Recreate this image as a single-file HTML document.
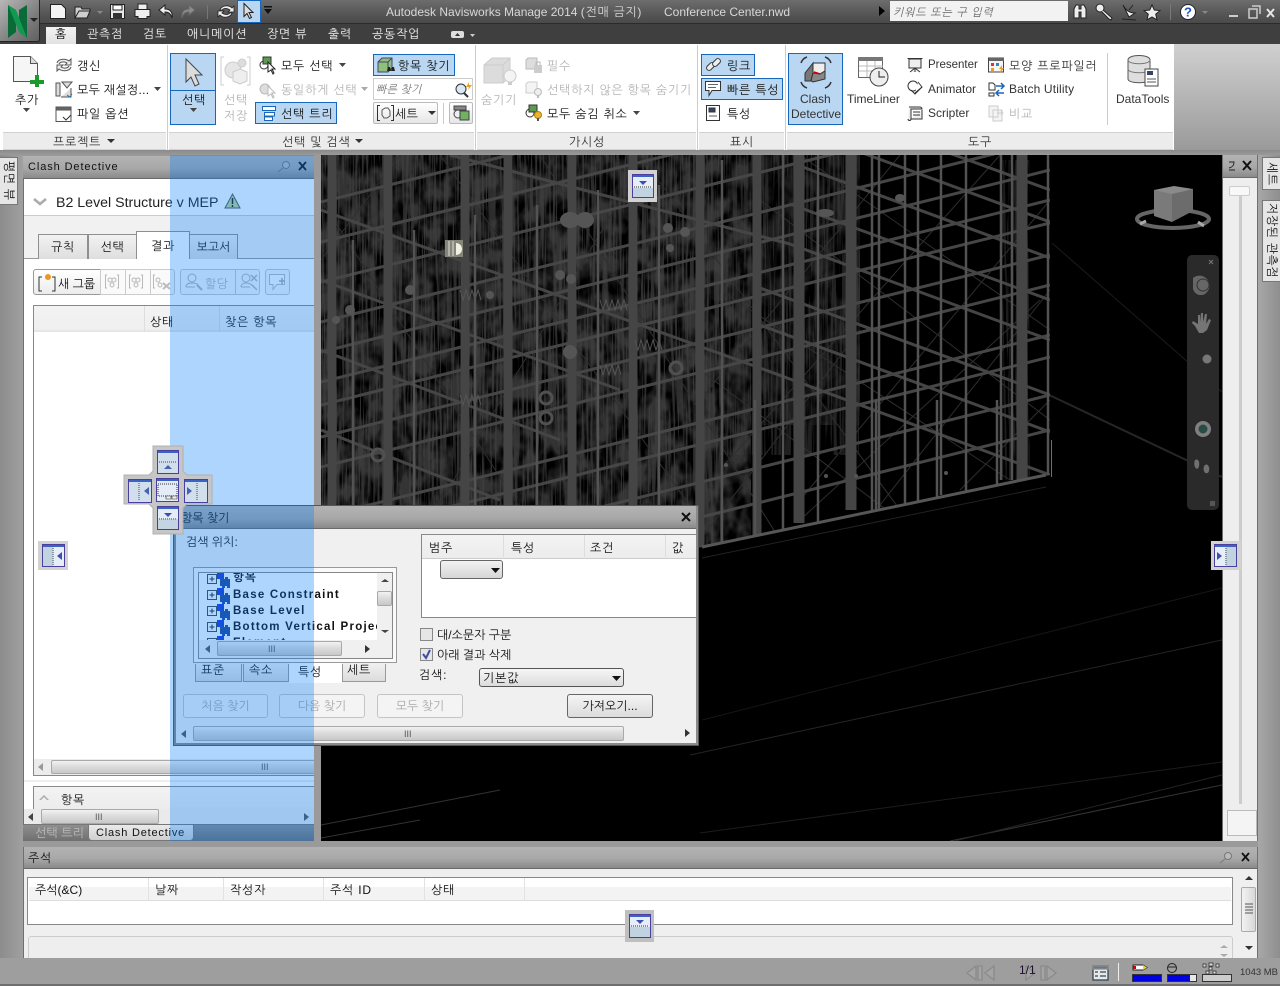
<!DOCTYPE html>
<html lang="ko"><head><meta charset="utf-8"><title>Autodesk Navisworks Manage 2014</title>
<style>
*{box-sizing:border-box}
html,body{margin:0;padding:0;width:1280px;height:986px;overflow:hidden;background:#9a9a9a}
body{position:relative;font:12px/14px "Liberation Sans","NanumGothic","Noto Sans CJK KR",sans-serif;color:#111}
.a{position:absolute}
.t{position:absolute;white-space:nowrap;line-height:14px;letter-spacing:.78px;margin-top:1px}
.l{letter-spacing:0;margin-top:0}
.d{letter-spacing:0}
.g{color:#b4b4b4}
.w{color:#eee}
.bb{position:absolute;background:#b9d7f2;border:1px solid #1768bd}
.band{position:absolute;top:132px;height:18px;background:#ececec;border-top:1px solid #d2d2d2;border-bottom:1px solid #d2d2d2}
.tb{position:absolute;background:linear-gradient(#b3b3b3,#a8a8a8 55%,#8a8a8a);border-bottom:1px solid #6a6a6a}
.sb{position:absolute;background:linear-gradient(#f2f2f2,#dcdcdc 45%,#c8c8c8);border:1px solid #a9a9a9;border-radius:2px}
.btn{position:absolute;border:1px solid #c4c4c4;border-radius:3px;background:#f4f4f4;text-align:center;color:#aaa;line-height:22px}
.tab{position:absolute;background:linear-gradient(#f2f2f2,#dedede);border:1px solid #8f8f8f;border-bottom:0;text-align:center;line-height:25px;letter-spacing:.6px}
svg{position:absolute;overflow:visible}
.vt{position:absolute;writing-mode:vertical-rl;text-orientation:sideways;white-space:nowrap;background:#e6e6e6;border:1px solid #777;text-align:center;letter-spacing:.6px}
</style></head><body>

<!-- background side gradients -->
<div class="a" style="left:0;top:150px;width:23px;height:836px;background:linear-gradient(90deg,#8c8c8c,#a0a0a0)"></div>
<div class="a" style="left:1258px;top:150px;width:22px;height:836px;background:linear-gradient(90deg,#a8a8a8,#8e8e8e)"></div>

<!-- title bar -->
<div class="a" style="left:0;top:0;width:1280px;height:24px;background:linear-gradient(#6d6d6d,#565656 60%,#4a4a4a);border-bottom:1px solid #2b2b2b"></div>
<div class="a" style="left:0;top:24px;width:1280px;height:20px;background:#3f3f3f"></div>
<div class="t l" style="left:386px;top:5px;color:#d8d8d8">Autodesk Navisworks Manage 2014 <span style="letter-spacing:.7px">(전매 금지)</span></div>
<div class="t l" style="left:664px;top:5px;color:#d8d8d8">Conference Center.nwd</div>
<svg style="left:878px;top:6px" width="8" height="10"><path d="M1 0l6 5-6 5z" fill="#000"/></svg>
<div class="a" style="left:890px;top:1px;width:178px;height:20px;background:#f2f2f2"></div>
<div class="t" style="left:893px;top:5px;color:#666;font-style:italic;font-size:11px">키워드 또는 구 입력</div>

<!-- app button -->
<div class="a" style="left:0;top:0;width:40px;height:42px;background:linear-gradient(135deg,#b8b8b8,#7e7e7e 60%,#606060);border:1px solid #222;border-top:0;border-left:0;border-radius:0 0 3px 0"></div>
<svg style="left:8px;top:5px" width="20" height="33"><path d="M0 0l8 5v22L0 33z" fill="#0a6a38"/><path d="M19 0l-8 5v22l8 6z" fill="#0a6a38"/><path d="M0 0l8 5 11 28-8-6z" fill="#0f9a50"/></svg>
<svg style="left:30px;top:18px" width="8" height="5"><path d="M0 0h8l-4 4z" fill="#222"/></svg>

<!-- QAT -->
<svg style="left:50px;top:3px" width="220" height="18" fill="none">
<path d="M.5 1.500h11l4 4v10H.5z" fill="#f4f4f4" stroke="#222"/>
<path d="M25 4h6l1 2h8v2H29l-4 7zM25 15h12l3-7H29" fill="#cfcfcf" stroke="#222"/>
<path d="M47 8l3 3 3-3" fill="#888"/>
<path d="M60.500 1.500h14v14h-14z" fill="#e8e8e8" stroke="#222"/><path d="M63 2h9v5h-9z" fill="#fff" stroke="#222"/><path d="M63 10h9v6h-9z" fill="#333"/>
<path d="M88 6V1h9v5M85 6.500h15v7h-3v2h-9v-2h-3z" fill="#eee" stroke="#222"/>
<path d="M115 2l-6 5 6 5V9c4 0 6 2 7 6 1-6-2-9-7-9z" fill="#eee" stroke="#222"/>
<path d="M139 2l6 5-6 5V9c-4 0-6 2-7 6-1-6 2-9 7-9z" fill="#8c8c8c" stroke="#666"/>
<path d="M157.500 2v14" stroke="#777"/>
<path d="M170 7c1-4 8-6 12-2l2-2v6h-6l2-2c-3-2-6-2-8 0zM182 10c-1 4-8 6-12 2l-2 2V8h6l-2 2c3 2 6 2 8 0z" fill="#eee" stroke="#222" stroke-width=".8"/>
</svg>
<div class="a" style="left:237px;top:0;width:24px;height:23px;background:#b9d7f2;border:1px solid #1768bd"></div>
<svg style="left:243px;top:3px" width="12" height="17"><path d="M1 .5v13l3-3 2.500 5 2-1-2.500-5h4z" fill="#ddd" stroke="#222"/></svg>
<svg style="left:264px;top:6px" width="9" height="8"><path d="M0 0h8v1.500H0zM0 3h8L4 8z" fill="#111"/></svg>

<!-- top-right icons -->
<svg style="left:1072px;top:2px" width="205" height="20" fill="none">
<path d="M2 7l2-4h3v4h2V3h3l2 4v9H9V10H7v6H2z" fill="#eee" stroke="#222"/>
<circle cx="28" cy="6" r="4" fill="#eee" stroke="#222"/><path d="M31 8l9 8-1 2-2-1-7-7" fill="#eee" stroke="#222"/>
<path d="M51 3c3 6 7 8 12 8l-6 4zM57 8l4-5M50 17l14 1" fill="#eee" stroke="#222"/>
<path d="M80 3l2.300 5 5.700.6-4.300 3.600 1.300 5.600L80 15l-5 2.800 1.300-5.600L72 8.600 77.700 8z" fill="#eee" stroke="#222"/>
<path d="M98.500 2v16" stroke="#7a7a7a"/>
<circle cx="116" cy="10" r="7.500" fill="#fff" stroke="#222"/><text x="116" y="14.500" font-size="13" font-weight="bold" fill="#1d55c0" text-anchor="middle" font-family="Liberation Sans">?</text>
<path d="M130 9h6l-3 3z" fill="#888"/>
<path d="M157 13h9v2h-9z" fill="#ccc"/>
<path d="M177 7h8v9h-8zM180 4h8v8" stroke="#ccc" stroke-width="1.500"/>
<path d="M195 7l7 8M202 7l-7 8" stroke="#e4e4e4" stroke-width="2"/>
</svg>

<!-- tabs -->
<div class="a" style="left:46px;top:27px;width:30px;height:17px;background:linear-gradient(#f2f2f2,#e2e2e2)"></div>
<div class="t" style="left:55px;top:26px">홈</div>
<div class="t w" style="left:87px;top:26px">관측점</div>
<div class="t w" style="left:143px;top:26px">검토</div>
<div class="t w" style="left:187px;top:26px">애니메이션</div>
<div class="t w" style="left:267px;top:26px">장면 뷰</div>
<div class="t w" style="left:328px;top:26px">출력</div>
<div class="t w" style="left:372px;top:26px">공동작업</div>
<svg style="left:451px;top:31px" width="24" height="8"><rect width="13" height="7" rx="2" fill="#ddd"/><path d="M4 5l2.500-3L9 5z" fill="#333"/><path d="M19 3h5l-2.500 3z" fill="#ccc"/></svg>

<!-- ribbon -->
<div class="a" style="left:0;top:44px;width:1174px;height:106px;background:#fff"></div>
<div class="a" style="left:1174px;top:44px;width:106px;height:106px;background:linear-gradient(#d0d0d0,#9a9a9a)"></div>
<div class="a" style="left:0;top:150px;width:1280px;height:5px;background:linear-gradient(#8a8a8a,#9a9a9a)"></div>
<div class="band" style="left:3px;width:163px"></div>
<div class="band" style="left:169px;width:305px"></div>
<div class="band" style="left:477px;width:219px"></div>
<div class="band" style="left:699px;width:85px"></div>
<div class="band" style="left:787px;width:386px"></div>
<div class="a" style="left:167px;top:45px;width:1px;height:105px;background:#ccc"></div>
<div class="a" style="left:475px;top:45px;width:1px;height:105px;background:#ccc"></div>
<div class="a" style="left:697px;top:45px;width:1px;height:105px;background:#ccc"></div>
<div class="a" style="left:785px;top:45px;width:1px;height:105px;background:#ccc"></div>
<div class="t" style="left:53px;top:134px;color:#333">프로젝트</div><svg style="left:107px;top:139px" width="8" height="5"><path d="M0 0h8L4 4z" fill="#333"/></svg>
<div class="t" style="left:282px;top:134px;color:#333">선택 및 검색</div><svg style="left:355px;top:139px" width="8" height="5"><path d="M0 0h8L4 4z" fill="#333"/></svg>
<div class="t" style="left:569px;top:134px;color:#333">가시성</div>
<div class="t" style="left:730px;top:134px;color:#333">표시</div>
<div class="t" style="left:968px;top:134px;color:#333">도구</div>

<!-- panel 1 -->
<svg style="left:12px;top:55px" width="32" height="32"><path d="M1.500 1.500h17l7 7v18h-24z" fill="#f6f6f6" stroke="#555"/><path d="M18.500 1.500v7h7" fill="#ddd" stroke="#555"/><path d="M23 20h4v5h5v4h-5v3h-4v-3h-5v-4h5z" fill="#1a9a2a"/></svg>
<div class="t" style="left:15px;top:92px">추가</div><svg style="left:23px;top:108px" width="8" height="5"><path d="M0 0h7L3.500 4z" fill="#444"/></svg>
<svg style="left:55px;top:57px" width="18" height="66" fill="none" stroke="#555">
<path d="M2 6c1-4 8-5 12-2l2-2v6h-6l2-2c-3-2-7-1-8 1M16 10c-1 4-8 5-12 2l-2 2V8h6l-2 2c3 2 7 1 8-1" fill="#eee"/>
<path d="M1 26h4v13H1zM7 25h10l-5 6z M6 40h10v-9" fill="#ddd"/><path d="M12 38l3 2 2-3" stroke="#27a"/>
<path d="M1 50.500h15v14H1z" fill="#fff"/><path d="M1 50h15v3H1z" fill="#666"/><path d="M8 60l3 3 5-5" stroke="#333"/>
</svg>
<div class="t" style="left:77px;top:58px">갱신</div>
<div class="t" style="left:77px;top:82px;letter-spacing:.3px">모두 재설정...</div><svg style="left:154px;top:87px" width="8" height="5"><path d="M0 0h7L3.500 4z" fill="#444"/></svg>
<div class="t" style="left:77px;top:106px">파일 옵션</div>

<!-- panel 2 -->
<div class="bb" style="left:170px;top:53px;width:46px;height:72px"></div>
<div class="a" style="left:171px;top:90px;width:44px;height:1px;background:#1768bd"></div>
<svg style="left:185px;top:58px" width="18" height="30"><path d="M1 1v23l5-5 4 9 4-2-4-9h7z" fill="#dcdcdc" stroke="#444"/></svg>
<div class="t" style="left:182px;top:92px">선택</div><svg style="left:190px;top:108px" width="8" height="5"><path d="M0 0h7L3.500 4z" fill="#444"/></svg>
<svg style="left:220px;top:56px" width="31" height="30" fill="none"><path d="M4 1H1v28h3M27 1h3v28h-3" stroke="#ccc"/><circle cx="13" cy="14" r="8" fill="#e6e6e6" stroke="#ccc"/><path d="M13 16l7-3 7 3v9l-7 3-7-3z" fill="#eee" stroke="#ccc"/><circle cx="22" cy="7" r="4" fill="#ddd" stroke="#ccc"/></svg>
<div class="t g" style="left:224px;top:92px">선택</div><div class="t g" style="left:224px;top:108px">저장</div>
<svg style="left:259px;top:57px" width="18" height="17"><circle cx="5" cy="8" r="4" fill="none" stroke="#333"/><rect x="4" y="0" width="8" height="7" fill="#5c9a50" stroke="#333"/><path d="M9 5v10l3-2 2 4 1-1-2-4h3z" fill="#fff" stroke="#222"/></svg>
<div class="t" style="left:281px;top:58px">모두 선택</div><svg style="left:339px;top:63px" width="8" height="5"><path d="M0 0h7L3.500 4z" fill="#444"/></svg>
<svg style="left:259px;top:81px" width="18" height="17"><circle cx="6" cy="8" r="5" fill="#ddd" stroke="#bbb"/><path d="M9 5v10l3-2 2 4 1-1-2-4h3z" fill="#fff" stroke="#bbb"/></svg>
<div class="t g" style="left:281px;top:82px">동일하게 선택</div><svg style="left:361px;top:87px" width="8" height="5"><path d="M0 0h7L3.500 4z" fill="#aaa"/></svg>
<div class="bb" style="left:255px;top:102px;width:82px;height:22px"></div>
<svg style="left:262px;top:106px" width="14" height="15" fill="none" stroke="#1768bd"><rect x=".5" y=".5" width="13" height="4" fill="#fff"/><rect x="2.500" y="6.500" width="10" height="3.500" fill="#fff"/><rect x="2.500" y="11" width="8" height="3.500" fill="#fff"/></svg>
<div class="t" style="left:281px;top:106px">선택 트리</div>
<div class="bb" style="left:373px;top:54px;width:82px;height:22px"></div>
<svg style="left:377px;top:57px" width="18" height="16"><path d="M1 5l4-4h10v10l-4 4H1z" fill="#8fbf7c" stroke="#446"/><path d="M1 5h10v10M11 5l4-4" fill="none" stroke="#446"/><path d="M10 14l1-4h2l1 4zM14 14l1-4h2l1 4z" fill="#222"/></svg>
<div class="t" style="left:398px;top:58px">항목 찾기</div>
<div class="a" style="left:373px;top:78px;width:100px;height:22px;border:1px solid #ccc;background:#fff"></div>
<div class="t" style="left:376px;top:82px;color:#777;font-style:italic;font-size:11px;letter-spacing:.2px">빠른 찾기</div>
<svg style="left:455px;top:81px" width="18" height="17"><circle cx="6" cy="8" r="5" fill="#dbe8f5" stroke="#333"/><path d="M9 12l4 4" stroke="#333" stroke-width="2"/><path d="M14 1l-3 5h3l-1 3 4-5h-3z" fill="#e8a020"/></svg>
<div class="a" style="left:373px;top:102px;width:65px;height:22px;border:1px solid #bbb;background:linear-gradient(#fff,#e6e6e6);border-radius:2px"></div>
<svg style="left:377px;top:105px" width="17" height="16" fill="none" stroke="#333"><path d="M3 .5H.5v15H3M14 .5h2.500v15H14"/><path d="M5 5l3-2h3l2 3v5l-3 2H7l-2-3z" stroke="#555"/></svg>
<div class="t" style="left:395px;top:106px;letter-spacing:.3px">세트</div>
<svg style="left:428px;top:111px" width="8" height="5"><path d="M0 0h8L4 4z" fill="#333"/></svg>
<div class="a" style="left:443px;top:103px;width:1px;height:21px;background:#ccc"></div>
<div class="a" style="left:449px;top:102px;width:24px;height:22px;border:1px solid #bbb;background:linear-gradient(#fff,#e6e6e6);border-radius:2px"></div>
<svg style="left:453px;top:105px" width="17" height="16"><path d="M1 1h12v4H1z" fill="#888" stroke="#444"/><circle cx="5" cy="9" r="4" fill="#eee" stroke="#444"/><rect x="7" y="6" width="9" height="9" fill="#74b060" stroke="#345"/></svg>

<!-- panel 3 -->
<svg style="left:483px;top:56px" width="36" height="30"><path d="M1 9l8-7h18v18l-7 7H1z" fill="#dcdcdc" stroke="#ccc"/><path d="M1 9h19v18M20 9l7-7" fill="none" stroke="#ccc"/><circle cx="27" cy="20" r="6" fill="#f4f4f4" stroke="#ccc"/><path d="M25 26h4v3h-4z" fill="#ccc"/></svg>
<div class="t g" style="left:481px;top:92px">숨기기</div>
<svg style="left:525px;top:57px" width="18" height="17"><path d="M1 3l2-2h9v11H1z" fill="#ddd" stroke="#bbb"/><path d="M9 8h8v8H9z" fill="#ccc"/><path d="M11 8V5h4v3" fill="none" stroke="#bbb"/></svg>
<div class="t g" style="left:547px;top:58px">필수</div>
<svg style="left:525px;top:81px" width="18" height="17"><path d="M1 3l2-2h9v11H1z" fill="#f4f4f4" stroke="#ccc"/><circle cx="13" cy="11" r="3.500" fill="#eee" stroke="#bbb"/><path d="M12 14h2v3h-2z" fill="#bbb"/></svg>
<div class="t g" style="left:547px;top:82px">선택하지 않은 항목 숨기기</div>
<svg style="left:525px;top:105px" width="18" height="17"><circle cx="5" cy="8" r="4" fill="none" stroke="#333"/><rect x="4" y="0" width="8" height="7" fill="#5c9a50" stroke="#333"/><circle cx="13" cy="10" r="3.500" fill="#f5b030" stroke="#a80"/><path d="M12 13h2v3h-2z" fill="#555"/></svg>
<div class="t" style="left:547px;top:106px">모두 숨김 취소</div><svg style="left:633px;top:111px" width="8" height="5"><path d="M0 0h7L3.500 4z" fill="#444"/></svg>

<!-- display -->
<div class="bb" style="left:701px;top:54px;width:54px;height:22px"></div>
<svg style="left:705px;top:57px" width="17" height="16" fill="none" stroke="#333"><rect x="1" y="7" width="9" height="5" rx="2.500" transform="rotate(-45 5.500 9.500)" fill="#eee"/><rect x="7" y="3" width="9" height="5" rx="2.500" transform="rotate(-45 11.500 5.500)" fill="#eee"/></svg>
<div class="t" style="left:727px;top:58px">링크</div>
<div class="bb" style="left:701px;top:78px;width:82px;height:22px"></div>
<svg style="left:705px;top:81px" width="17" height="17" fill="#fff" stroke="#333"><path d="M.5.500h15v9H7l-3 5V9.500H.5z"/><path d="M3 3.500h10M3 6.500h8" fill="none" stroke-width=".8"/></svg>
<div class="t" style="left:727px;top:82px">빠른 특성</div>
<svg style="left:706px;top:105px" width="14" height="16" fill="#fff" stroke="#333"><path d="M.5.500h13v15H.5z"/><path d="M3 3h6v4H3z" fill="#346"/><path d="M3 11h8" fill="none" stroke-width=".8"/></svg>
<div class="t" style="left:727px;top:106px">특성</div>

<!-- tools -->
<div class="bb" style="left:788px;top:53px;width:55px;height:72px"></div>
<svg style="left:798px;top:55px" width="36" height="36" fill="none"><path d="M3 8c1-3 3-5 6-6M33 8c-1-3-3-5-6-6M3 27c1 3 3 5 6 6M33 27c-1 3-3 5-6 6" stroke="#333" stroke-width="1.500"/><path d="M7 18l8-10v10l-2 8H7z" fill="#777" stroke="#333"/><path d="M15 8h12v8l-5 3-7-1z" fill="#eee" stroke="#333"/><path d="M22 19l5-3v8l-12 3-2-1 2-8z" fill="#888" stroke="#333"/><path d="M16 17l6 2" stroke="#c00" stroke-width="1.500"/></svg>
<div class="t l" style="left:800px;top:92px;color:#333">Clash</div>
<div class="t l" style="left:791px;top:107px;color:#333">Detective</div>
<svg style="left:858px;top:57px" width="32" height="31"><rect x=".5" y=".5" width="24" height="20" fill="#fff" stroke="#666"/><path d="M0 0h25v4H0z" fill="#777"/><path d="M1 9h24M1 14h24M9 4v16M17 4v16" stroke="#bbb"/><circle cx="21" cy="20" r="9" fill="#eee" stroke="#444"/><path d="M21 14v6h6" fill="none" stroke="#222"/></svg>
<div class="t l" style="left:847px;top:92px;color:#333">TimeLiner</div>
<svg style="left:907px;top:57px" width="16" height="66" fill="none" stroke="#333">
<path d="M.5 1.500h15M2 2h12v9H2zM8 11v4M3 15l5-4 5 4" fill="#eee"/>
<circle cx="6" cy="29" r="5" fill="#fff"/><path d="M8 36l7-6-4-5" fill="#fff"/><path d="M4 33l4 4 7-7"/>
<path d="M2 50h11c1 0 2 1 2 2H4v10c0 2-3 2-3 0M4 62h11v-9M6 55h7M6 58h7" fill="#eee"/></svg>
<div class="t l" style="left:928px;top:58px;color:#333;font-size:11.500px">Presenter</div>
<div class="t l" style="left:928px;top:82px;color:#333">Animator</div>
<div class="t l" style="left:928px;top:106px;color:#333">Scripter</div>
<svg style="left:988px;top:57px" width="17" height="66" fill="none"><rect x=".5" y="1" width="15" height="14" fill="#f6f6f6" stroke="#444"/><path d="M1 1h15v3H1z" fill="#666"/><rect x="3" y="6" width="3" height="3" fill="#d33"/><rect x="8" y="6" width="3" height="3" fill="#38b"/><rect x="3" y="11" width="3" height="3" fill="#e92"/><path d="M14 8l-3 4h2l-1 4 4-5h-2z" fill="#e8a020"/>
<path d="M1 26h4l2 2v5H1zM1 36h5v3H1z" stroke="#333" fill="#fff"/><path d="M8 29h8m-3-3l3 3-3 3M16 36H8m3-3l-3 3 3 3" stroke="#1b66bd" stroke-width="1.500"/>
<path d="M1 49h9v11H1z M5 53h9v11H5z" stroke="#ccc" fill="#f4f4f4"/><path d="M9 56h6m-2-2l2 2-2 2" stroke="#ccc"/></svg>
<div class="t" style="left:1009px;top:58px;color:#333">모양 프로파일러</div>
<div class="t l" style="left:1009px;top:82px;color:#333;letter-spacing:.15px">Batch Utility</div>
<div class="t g" style="left:1009px;top:106px">비교</div>
<div class="a" style="left:1107px;top:53px;width:1px;height:72px;background:#ccc"></div>
<svg style="left:1127px;top:55px" width="32" height="33"><path d="M1 5c0-6 22-6 22 0v19c0 5-22 5-22 0z" fill="#dedede" stroke="#555"/><path d="M1 5c0 5 22 5 22 0M1 14c0 5 22 5 22 0" fill="none" stroke="#777"/><rect x="18" y="14" width="13" height="17" fill="#fff" stroke="#444"/><rect x="20" y="16" width="6" height="4" fill="#346"/><path d="M20 24h9M20 27h9" stroke="#555"/></svg>
<div class="t l" style="left:1116px;top:92px;color:#333">DataTools</div>

<!-- viewport -->
<svg style="left:321px;top:155px;overflow:hidden" width="901" height="686" viewBox="321 155 901 686">
<defs>
<filter id="blob" x="0" y="0" width="100%" height="100%" color-interpolation-filters="sRGB"><feTurbulence type="fractalNoise" baseFrequency=".06 .04" numOctaves="3" seed="7"/><feColorMatrix values="0 0 0 0 .2 0 0 0 0 .2 0 0 0 0 .2 0 0 0 3 -1"/></filter>
<filter id="streak" x="0" y="0" width="100%" height="100%" color-interpolation-filters="sRGB"><feTurbulence type="fractalNoise" baseFrequency=".45 .012" numOctaves="2" seed="3"/><feColorMatrix values="0 0 0 0 .25 0 0 0 0 .25 0 0 0 0 .25 0 0 0 9 -4.300"/></filter>
<clipPath id="cp"><path d="M321 155H1050V475L702 547 321 627Z"/></clipPath>
</defs>
<rect x="321" y="155" width="901" height="686" fill="#000"/>
<g fill="none">
<path d="M690 755L1222 640" stroke="#242424"/><path d="M702 720L1222 588" stroke="#161616"/>
<path d="M950 841L1222 785" stroke="#363636"/><path d="M955 841L1222 775" stroke="#242424"/><path d="M700 833L1222 762" stroke="#1c1c1c"/>
<path d="M321 838L420 820M321 825L500 790" stroke="#333"/>
<path d="M1052 243L1222 392" stroke="#1c1c1c"/><path d="M1045 393L1222 477" stroke="#262626" stroke-width="2"/>
<path d="M702 558L1046 487" stroke="#222"/>
</g>
<g clip-path="url(#cp)">
<rect x="321" y="155" width="430" height="480" filter="url(#blob)"/>
<rect x="750" y="155" width="110" height="270" filter="url(#blob)" opacity=".6"/>
<rect x="321" y="155" width="400" height="480" filter="url(#streak)" opacity=".7"/>
<rect x="720" y="155" width="140" height="300" filter="url(#streak)" opacity=".5"/>
<rect x="1000" y="160" width="30" height="320" filter="url(#streak)" opacity=".45"/>
<!-- thin diagonals -->
<g stroke="#2e2e2e" fill="none">
<path d="M800 155L1050 330M760 200L1050 420M720 290L1010 480M700 370L900 520M1050 200L800 500M1050 290L880 505M1000 155L720 470M900 155L700 400M1050 400L960 490M640 155L900 510M540 155L780 540M700 540L860 330M800 520L1040 300M440 155L700 520M321 200L560 570M400 155L321 260M620 200L400 570"/>
</g>
<!-- rising beams -->
<g stroke="#464646" fill="none" stroke-width="3">
<path d="M321 382L1050 200M321 405L1050 223M321 437L1050 255M321 467L1050 285M321 517L1050 335M321 539L1050 357M321 577L1050 395M321 612L1050 430"/>
<path d="M321 352L1050 170M321 322L1050 140M321 282L1050 100M321 242L1050 60M321 202L1050 20"/>
</g>
<!-- descending beams -->
<g stroke="#454545" fill="none" stroke-width="3">
<path d="M760 368L1050 475M760 325L1050 432M760 288L1050 395M790 244L1050 340M790 204L1050 300M800 166L1050 258M860 152L1050 222M900 135L1050 190"/>
<path d="M321 210L760 368M321 280L620 390M321 350L560 440M321 430L500 500M450 155L790 244"/>
</g>
<!-- vertical bands -->
<g stroke="#454545" fill="none" stroke-width="9">
<path d="M332 155V640M388 155V630M465 155V620M508 155V610M572 155V600M633 155V590M700 155V570M757 155V560"/>
<path d="M799 155V523M851 155V510M1022 155V480" stroke-width="11"/>
</g>
<g stroke="#535353" fill="none" stroke-width="2.500">
<path d="M353 240V640M414 230V630M475 215V620M537 205V610M598 190V600M659 185V590M722 160V560M783 155V550M818 155V530M872 155V520M879 155V510M905 155V510M918 155V510M941 155V495M966 155V495M1001 155V480M1012 155V480M1048 155V476M755 400V537M876 400V512M937 400V500M997 400V485"/>
</g>
<g fill="#555"><ellipse cx="570" cy="220" rx="10" ry="8"/><ellipse cx="585" cy="220" rx="9" ry="8"/><circle cx="668" cy="228" r="5"/><circle cx="685" cy="232" r="5"/><circle cx="670" cy="248" r="4"/><circle cx="560" cy="275" r="5"/><circle cx="571" cy="279" r="5"/><circle cx="410" cy="290" r="5"/><circle cx="350" cy="310" r="5"/><circle cx="570" cy="352" r="7"/><circle cx="336" cy="320" r="4"/><circle cx="490" cy="295" r="4"/><ellipse cx="900" cy="198" rx="5" ry="4"/><ellipse cx="825" cy="213" rx="9" ry="4"/><circle cx="726" cy="465" r="2"/><circle cx="826" cy="476" r="2"/><circle cx="856" cy="476" r="2"/><circle cx="946" cy="473" r="2"/></g>
<g fill="none" stroke="#505050" stroke-width="3"><circle cx="676" cy="368" r="6"/><circle cx="546" cy="398" r="6"/><circle cx="546" cy="418" r="6"/><circle cx="378" cy="455" r="6"/></g>
<g fill="none" stroke="#555" stroke-width="1"><path d="M600 300l3 10 3-10 3 10 3-10 3 10 3-10 3 10 3-10 3 10M635 340l3 10 3-10 3 10 3-10 3 10 3-10 3 10 3-10 3 10M600 365l3 10 3-10 3 10 3-10 3 10 3-10 3 10M460 395l3 10 3-10 3 10 3-10 3 10 3-10 3 10M460 290l3 10 3-10 3 10 3-10 3 10 3-10 3 10"/></g>
</g>
<path d="M702 547L1046 475" stroke="#565656" stroke-width="3"/>
<path d="M1051.500 440V477" stroke="#707070"/>
<rect x="445" y="240" width="18" height="17" fill="#86857a"/><path d="M449 241v15M453 241v15" stroke="#ddd"/><path d="M456 243a6 6 0 0 1 0 12z" fill="#f0f0e4"/>
<!-- view cube -->
<ellipse cx="1173" cy="219" rx="36" ry="9" fill="none" stroke="#666" stroke-width="4"/>
<path d="M1154 190l20-4 19 3-2 5-17 3-18-3z" fill="#8a8a8a"/><path d="M1154 190l18 4v28l-18-6z" fill="#7a7a7a"/><path d="M1172 194l21-5v22l-21 11z" fill="#6c6c6c"/>
<path d="M1140 224l6-3M1198 222l6 4" stroke="#aaa" stroke-width="3"/>
<!-- nav bar -->
<rect x="1187" y="255" width="32" height="255" rx="5" fill="#2a2a2a"/>
<path d="M1209 260l4 4M1213 260l-4 4" stroke="#777"/>
<path d="M1193 278a10 10 0 1 1 10 17h-4a9 9 0 0 1-6-6z" fill="#666"/><circle cx="1203" cy="285" r="6" fill="none" stroke="#333"/>
<path d="M1195 326l-3-3 1-2 5 3v-9h2v7l1-9h2v9l2-8h2l-1 10 3-5 2 1-4 10-4 3h-4z" fill="#757575"/>
<circle cx="1207" cy="359" r="4.500" fill="#777"/>
<circle cx="1203" cy="429" r="8" fill="#808080"/><circle cx="1203" cy="429" r="4.500" fill="#274d44"/>
<path d="M1195 460c3-2 5 2 4 6s-3 3-4 1-1-5 0-7zM1205 465c3-2 5 3 4 6s-4 3-5 0 0-5 1-6z" fill="#707070"/>
<rect x="1210" y="501" width="5" height="5" fill="#555"/>
</svg>

<!-- left clash panel -->
<div class="a" style="left:23px;top:156px;width:291px;height:685px;background:#fff;border-left:1px solid #6f6f6f"></div>
<div class="tb" style="left:23px;top:156px;width:291px;height:23px"></div>
<div class="t" style="left:28px;top:159px;letter-spacing:.9px;font-size:11px">Clash Detective</div>
<svg style="left:277px;top:160px" width="36" height="14"><path d="M1 12l5-4" stroke="#777"/><circle cx="9" cy="5" r="3.500" fill="#bbb" stroke="#777"/><path d="M22 2l7 8M29 2l-7 8" stroke="#111" stroke-width="1.800"/></svg>
<svg style="left:33px;top:198px" width="14" height="9"><path d="M1 1l6 5 6-5" fill="none" stroke="#aaa" stroke-width="2.500"/></svg>
<div class="t l" style="left:56px;top:195px;font-size:14.200px;line-height:16px;color:#222">B2 Level Structure v MEP</div>
<svg style="left:224px;top:193px" width="17" height="16"><path d="M8.500 1L16 15H1z" fill="#c6d88e" stroke="#555"/><path d="M8.500 5v6M8.500 12v2" stroke="#222" stroke-width="1.500"/></svg>
<div class="a" style="left:24px;top:215px;width:290px;height:44px;background:#f1f1f1;border-top:1px solid #ccc;border-bottom:1px solid #9a9a9a"></div>
<div class="tab" style="left:38px;top:234px;width:50px;height:25px">규칙</div>
<div class="tab" style="left:88px;top:234px;width:49px;height:25px">선택</div>
<div class="tab" style="left:136px;top:231px;width:54px;height:28px;background:#fff;line-height:29px">결과</div>
<div class="tab" style="left:189px;top:234px;width:49px;height:25px;letter-spacing:0">보고서</div>
<!-- toolbar -->
<div class="a" style="left:33px;top:269px;width:68px;height:26px;border:1px solid #999;border-radius:3px 0 0 3px;background:linear-gradient(#fff,#ececec)"></div>
<svg style="left:37px;top:273px" width="20" height="20"><path d="M5 4H2v14h3M15 4h3v14h-3" fill="none" stroke="#333"/><circle cx="11" cy="4" r="3" fill="#e9991f"/></svg>
<div class="t" style="left:58px;top:276px;letter-spacing:0">새 그룹</div>
<div class="a" style="left:100px;top:269px;width:75px;height:26px;border:1px solid #ccc;border-radius:0 3px 3px 0;background:#fafafa"></div>
<div class="a" style="left:125px;top:270px;width:1px;height:24px;background:#ccc"></div>
<div class="a" style="left:150px;top:270px;width:1px;height:24px;background:#ccc"></div>
<svg style="left:105px;top:274px" width="66" height="16" fill="none" stroke="#b8b8b8"><path d="M2 1H.5v13H2M12 1h1.500v13H12M26 1h-1.500v13H26M36 1h1.500v13H36M50 1h-1.500v13H50"/><circle cx="5" cy="6" r="2"/><circle cx="9" cy="6" r="2"/><circle cx="7" cy="11" r="2"/><circle cx="29" cy="6" r="2"/><circle cx="33" cy="6" r="2"/><circle cx="31" cy="11" r="2"/><circle cx="53" cy="6" r="2"/><circle cx="55" cy="11" r="2"/><path d="M58 9l7 6m0-6l-7 6" stroke="#bbb" stroke-width="2"/></svg>
<div class="a" style="left:180px;top:269px;width:80px;height:26px;border:1px solid #c8c8c8;border-radius:3px;background:#fafafa"></div>
<div class="a" style="left:235px;top:270px;width:1px;height:24px;background:#c8c8c8"></div>
<svg style="left:185px;top:273px" width="18" height="18" fill="none" stroke="#b4b4b4"><circle cx="7" cy="5" r="4"/><path d="M1 14c0-3 3-4 6-4s6 1 6 2M1 14h9"/><path d="M12 12l5 5" stroke-width="2"/></svg>
<div class="t g" style="left:205px;top:276px;letter-spacing:.4px">할당</div>
<svg style="left:240px;top:273px" width="18" height="18" fill="none" stroke="#b4b4b4"><circle cx="6" cy="5" r="4"/><path d="M1 14c0-3 3-4 5-4s6 1 6 3M1 14h9"/><path d="M11 2l6 6m0-6l-6 6M12 12l5 5" stroke-width="1.500"/></svg>
<div class="a" style="left:265px;top:269px;width:25px;height:26px;border:1px solid #c8c8c8;border-radius:3px;background:#fafafa"></div>
<svg style="left:269px;top:274px" width="18" height="16" fill="#fff" stroke="#bbb"><path d="M.5.500h15v10H8l-4 5v-5H.5z"/><path d="M10 7h6M13 4v6" stroke="#aaa" stroke-width="1.500"/></svg>
<!-- results table -->
<div class="a" style="left:33px;top:305px;width:281px;height:471px;border:1px solid #888;border-right:0;background:#fff"></div>
<div class="a" style="left:34px;top:306px;width:280px;height:26px;background:linear-gradient(#f3f3f3,#efefef);border-bottom:2px solid #e6e6e6"></div>
<div class="a" style="left:144px;top:306px;width:1px;height:26px;background:#ddd"></div>
<div class="a" style="left:219px;top:306px;width:1px;height:26px;background:#ddd"></div>
<div class="t" style="left:150px;top:314px">상태</div>
<div class="t" style="left:225px;top:314px">찾은 항목</div>
<div class="a" style="left:34px;top:759px;width:280px;height:16px;background:#ececec"></div>
<svg style="left:38px;top:763px" width="6" height="8"><path d="M5 0v8L0 4z" fill="#999"/></svg>
<div class="sb" style="left:51px;top:760px;width:263px;height:14px;border-right:0;border-radius:2px 0 0 2px"></div>
<div class="t l" style="left:261px;top:760px;font-size:9px;color:#555">III</div>
<div class="a" style="left:24px;top:780px;width:290px;height:2px;background:#eee"></div>
<div class="a" style="left:33px;top:786px;width:281px;height:23px;border:1px solid #888;border-right:0;border-bottom:0;background:linear-gradient(#f3f3f3,#ececec)"></div>
<svg style="left:39px;top:794px" width="11" height="7"><path d="M0 6l5-5 5 5-2 0-3-3-3 3z" fill="#aaa"/></svg>
<div class="t" style="left:61px;top:792px">항목</div>
<div class="a" style="left:24px;top:809px;width:290px;height:16px;background:#eaeaea;border-bottom:1px solid #777"></div>
<svg style="left:28px;top:813px" width="6" height="8"><path d="M5 0v8L0 4z" fill="#444"/></svg>
<svg style="left:304px;top:813px" width="6" height="8"><path d="M0 0v8l5-4z" fill="#555"/></svg>
<div class="sb" style="left:41px;top:809px;width:118px;height:15px"></div>
<div class="t l" style="left:95px;top:810px;font-size:9px;color:#555">III</div>
<div class="a" style="left:23px;top:825px;width:291px;height:16px;background:linear-gradient(#8e8e8e,#6f6f6f)"></div>
<div class="t" style="left:35px;top:825px;color:#bbb;letter-spacing:.1px">선택 트리</div>
<div class="a" style="left:88px;top:825px;width:106px;height:16px;background:linear-gradient(#eaeaea,#cfcfcf);border:1px solid #777;border-top:0;border-radius:0 0 4px 4px"></div>
<div class="t" style="left:96px;top:825px;font-size:11px;letter-spacing:.8px">Clash Detective</div>

<!-- right side panel -->
<div class="a" style="left:1222px;top:155px;width:36px;height:686px;background:#eee;border-left:1px solid #6f6f6f;border-right:1px solid #6f6f6f"></div>
<div class="tb" style="left:1223px;top:155px;width:34px;height:23px"></div>
<svg style="left:1228px;top:160px" width="26" height="12"><path d="M1 2h5c0 3-1 5-5 6M1 10h6" fill="none" stroke="#222"/><path d="M15 1l8 9M23 1l-8 9" stroke="#111" stroke-width="2"/></svg>
<div class="a" style="left:1239px;top:190px;width:3px;height:614px;background:#ccc"></div>
<div class="a" style="left:1229px;top:186px;width:21px;height:10px;background:#f8f8f8;border:1px solid #ccc;border-radius:2px"></div>
<div class="a" style="left:1227px;top:810px;width:30px;height:26px;background:#f4f4f4;border:1px solid #bbb"></div>
<div class="vt" style="left:1262px;top:157px;width:18px;height:33px;border-right:0;line-height:16px">세트</div>
<div class="vt" style="left:1262px;top:200px;width:18px;height:82px;border-right:0;line-height:16px">저장된 관측점</div>
<div class="vt" style="left:0;top:157px;width:18px;height:48px;border-left:0;line-height:16px">평면 뷰</div>

<!-- annotations panel -->
<div class="a" style="left:23px;top:847px;width:1235px;height:111px;background:#efefef;border:1px solid #6f6f6f;border-bottom:0"></div>
<div class="tb" style="left:24px;top:847px;width:1233px;height:22px"></div>
<div class="t" style="left:28px;top:850px">주석</div>
<svg style="left:1219px;top:851px" width="36" height="14"><path d="M1 12l5-4" stroke="#777"/><circle cx="9" cy="5" r="3.500" fill="#bbb" stroke="#777"/><path d="M23 2l7 8M30 2l-7 8" stroke="#111" stroke-width="1.800"/></svg>
<div class="a" style="left:27px;top:877px;width:1206px;height:48px;background:#fff;border:1px solid #888"></div>
<div class="a" style="left:29px;top:887px;width:1202px;height:14px;background:#f3f3f3;border-bottom:1px solid #ddd"></div>
<div class="a" style="left:148px;top:878px;width:1px;height:23px;background:#e2e2e2"></div>
<div class="a" style="left:223px;top:878px;width:1px;height:23px;background:#e2e2e2"></div>
<div class="a" style="left:323px;top:878px;width:1px;height:23px;background:#e2e2e2"></div>
<div class="a" style="left:424px;top:878px;width:1px;height:23px;background:#e2e2e2"></div>
<div class="a" style="left:524px;top:878px;width:1px;height:23px;background:#e2e2e2"></div>
<div class="t" style="left:35px;top:882px;letter-spacing:0">주석(&amp;C)</div>
<div class="t" style="left:155px;top:882px">날짜</div>
<div class="t" style="left:230px;top:882px">작성자</div>
<div class="t" style="left:330px;top:882px">주석 ID</div>
<div class="t" style="left:431px;top:882px">상태</div>
<div class="a" style="left:28px;top:936px;width:1205px;height:22px;border:1px solid #ccc;border-bottom:0;background:#eee;border-radius:3px 3px 0 0"></div>
<svg style="left:1219px;top:943px" width="10" height="15"><path d="M1 5l4-3 4 3zM1 11h8l-4 3z" fill="#aaa"/></svg>
<div class="a" style="left:1241px;top:887px;width:15px;height:45px;border:1px solid #aaa;border-radius:2px;background:linear-gradient(90deg,#f2f2f2,#d8d8d8)"></div>
<svg style="left:1244px;top:874px" width="10" height="80"><path d="M1 6l4-4 4 4z" fill="#333"/><path d="M1 30h8M1 33h8M1 36h8M1 39h8" stroke="#555"/><path d="M1 72h8l-4 4z" fill="#333"/></svg>

<!-- status bar -->
<div class="a" style="left:0;top:958px;width:1280px;height:26px;background:#9e9e9e"></div>
<div class="a" style="left:0;top:984px;width:1280px;height:2px;background:#6e6e6e"></div>
<svg style="left:966px;top:964px" width="145" height="18" fill="none" stroke="#8a8a8a" stroke-width="1.300">
<path d="M10 2L1 9l9 7zM12 2h4v14h-4zM28 2l-9 7 9 7zM60 2l9 7-9 7zM75 2h4v14h-4zM81 2l9 7-9 7z" fill="#a4a4a4"/>
<rect x="127" y="2" width="15" height="14" fill="#e8e8e8" stroke="#345"/><path d="M127 2h15v3h-15z" fill="#678"/><path d="M129 8h3M134 8h6M129 12h3M134 12h6" stroke="#345"/>
</svg>
<div class="t l" style="left:1019px;top:963px;color:#201030">1/1</div>
<div class="a" style="left:1118px;top:963px;width:1px;height:18px;background:#eee"></div>
<svg style="left:1132px;top:962px" width="102" height="20">
<path d="M1 3h10l4 2.500L11 8H1z" fill="#fff" stroke="#222"/><rect x="1" y="4" width="3" height="3" fill="#c00"/><path d="M11 3l4 2.500L11 8z" fill="#e8d040"/>
<rect x=".5" y="12.500" width="29" height="7" fill="#0000e0" stroke="#333"/>
<circle cx="40" cy="6" r="4.500" fill="none" stroke="#222"/><path d="M36 5h8" stroke="#222"/>
<rect x="35.500" y="12.500" width="29" height="7" fill="#e8e8e8" stroke="#333"/><rect x="36" y="13" width="22" height="6" fill="#0000e0"/>
<path d="M71 2h3v3h-3zM84 2h3v3h-3zM77 1h4v3h-4zM74 9h3v3h-3zM81 9h3v3h-3zM77 5h3v3h-3z" fill="#ddd" stroke="#222" stroke-width=".7"/>
<rect x="70.500" y="12.500" width="29" height="7" fill="#ccc" stroke="#333"/>
</svg>
<div class="t l" style="left:1240px;top:966px;font-size:9.500px;color:#333">1043 MB</div>

<!-- find items dialog -->
<div class="a" style="left:173px;top:505px;width:526px;height:241px;background:#f0f0f0;border:3px solid #8a8a8a;outline:1px solid #555;outline-offset:-1px"></div>
<div class="tb" style="left:176px;top:506px;width:520px;height:23px"></div>
<div class="t d" style="left:181px;top:510px">항목 찾기</div>
<svg style="left:681px;top:512px" width="10" height="10"><path d="M1 1l8 8M9 1l-8 8" stroke="#111" stroke-width="2"/></svg>
<div class="t d" style="left:186px;top:534px">검색 위치:</div>
<div class="a" style="left:193px;top:567px;width:204px;height:96px;border:1px solid #999;background:#fafafa"></div>
<div class="a" style="left:198px;top:572px;width:195px;height:87px;border:1px solid #888;background:#f0f0f0"></div>
<div class="a" style="left:199px;top:573px;width:178px;height:67px;background:#fff;overflow:hidden">
 <style>.r{position:absolute;left:34px;white-space:nowrap;font-weight:bold;font-size:11.500px;letter-spacing:1.250px;line-height:14px;color:#111}</style>
 <div class="r" style="top:-2px">항목</div>
 <div class="r" style="top:15px">Base Constraint</div>
 <div class="r" style="top:31px">Base Level</div>
 <div class="r" style="top:47px">Bottom Vertical Projection</div>
 <div class="r" style="top:63px">Element</div>
 <svg style="left:8px;top:0" width="25" height="74">
  <defs><g id="ti"><rect x=".5" y=".500" width="9" height="9" fill="#fff" stroke="#444"/><path d="M2.500 5h5M5 2.500v5" stroke="#222"/><rect x="10" y="-2" width="7" height="7" fill="#1a3ae0"/><path d="M13 3h3v2h2V3h3v2h2v9h-3v-2h-2v2h-3v-2h-2z" fill="#22479a"/></g></defs>
  <use href="#ti" y="1"/><use href="#ti" y="17"/><use href="#ti" y="33"/><use href="#ti" y="49"/><use href="#ti" y="65"/>
 </svg>
</div>
<div class="a" style="left:377px;top:573px;width:15px;height:67px;background:#f0f0f0"></div>
<svg style="left:380px;top:578px" width="10" height="58"><path d="M1 4l4-3 4 3z" fill="#444"/><path d="M1 52h8l-4 3z" fill="#444"/></svg>
<div class="sb" style="left:377px;top:591px;width:15px;height:15px"></div>
<svg style="left:205px;top:645px" width="6" height="8"><path d="M5 0v8L0 4z" fill="#555"/></svg>
<div class="sb" style="left:217px;top:641px;width:125px;height:15px"></div>
<div class="t l" style="left:268px;top:642px;font-size:9px;color:#555">III</div>
<svg style="left:365px;top:645px" width="6" height="8"><path d="M0 0v8l5-4z" fill="#333"/></svg>
<div class="a" style="left:195px;top:664px;width:47px;height:18px;border:1px solid #999;border-top:0;background:linear-gradient(#f0f0f0,#dcdcdc)"></div>
<div class="a" style="left:243px;top:664px;width:46px;height:18px;border:1px solid #999;border-top:0;background:linear-gradient(#f0f0f0,#dcdcdc)"></div>
<div class="a" style="left:289px;top:663px;width:53px;height:20px;background:#fff"></div>
<div class="a" style="left:342px;top:664px;width:44px;height:18px;border:1px solid #999;border-top:0;background:linear-gradient(#f0f0f0,#dcdcdc)"></div>
<div class="t" style="left:201px;top:662px">표준</div>
<div class="t" style="left:249px;top:662px">속소</div>
<div class="t" style="left:298px;top:664px">특성</div>
<div class="t" style="left:347px;top:662px">세트</div>
<div class="btn" style="left:183px;top:694px;width:85px;height:24px">처음 찾기</div>
<div class="btn" style="left:279px;top:694px;width:86px;height:24px">다음 찾기</div>
<div class="btn" style="left:377px;top:694px;width:86px;height:24px">모두 찾기</div>
<div class="btn" style="left:567px;top:694px;width:86px;height:24px;border-color:#666;color:#111;background:linear-gradient(#f4f4f4,#dcdcdc)">가져오기...</div>
<div class="sb" style="left:193px;top:726px;width:431px;height:15px"></div>
<div class="t l" style="left:404px;top:727px;font-size:9px;color:#555">III</div>
<svg style="left:181px;top:730px" width="6" height="8"><path d="M5 0v8L0 4z" fill="#555"/></svg>
<svg style="left:685px;top:729px" width="6" height="8"><path d="M0 0v8l5-4z" fill="#333"/></svg>
<!-- grid -->
<div class="a" style="left:421px;top:534px;width:275px;height:84px;background:#fff;border:1px solid #888;border-right:0"></div>
<div class="a" style="left:422px;top:535px;width:274px;height:24px;background:linear-gradient(#f3f3f3,#ececec);border-bottom:1px solid #ccc"></div>
<div class="a" style="left:503px;top:535px;width:1px;height:24px;background:#ddd"></div>
<div class="a" style="left:584px;top:535px;width:1px;height:24px;background:#ddd"></div>
<div class="a" style="left:665px;top:535px;width:1px;height:24px;background:#ddd"></div>
<div class="t" style="left:429px;top:540px">범주</div>
<div class="t" style="left:511px;top:540px">특성</div>
<div class="t" style="left:590px;top:540px">조건</div>
<div class="t" style="left:672px;top:540px">값</div>
<div class="a" style="left:440px;top:560px;width:63px;height:19px;border:1px solid #666;border-radius:3px;background:linear-gradient(#f2f2f2,#d6d6d6)"></div>
<svg style="left:491px;top:568px" width="9" height="5"><path d="M0 0h9L4.500 5z" fill="#111"/></svg>
<div class="a" style="left:420px;top:628px;width:13px;height:13px;border:1px solid #888;background:#e6e6e6"></div>
<div class="t d" style="left:437px;top:627px">대/소문자 구분</div>
<div class="a" style="left:420px;top:648px;width:13px;height:13px;border:1px solid #888;background:#e6e6e6"></div>
<svg style="left:421px;top:649px" width="11" height="11"><path d="M2 5l3 4 4-8" fill="none" stroke="#3a4fa0" stroke-width="2"/></svg>
<div class="t d" style="left:437px;top:647px">아래 결과 삭제</div>
<div class="t" style="left:419px;top:667px">검색:</div>
<div class="a" style="left:479px;top:668px;width:145px;height:19px;border:1px solid #555;border-radius:3px;background:linear-gradient(#f6f6f6,#dcdcdc)"></div>
<div class="t" style="left:483px;top:670px">기본값</div>
<svg style="left:612px;top:676px" width="9" height="5"><path d="M0 0h9L4.500 5z" fill="#111"/></svg>

<!-- selection overlay -->
<div class="a" style="left:170px;top:155px;width:144px;height:686px;background:rgba(0,124,250,.32)"></div>

<!-- dock compass -->
<svg style="left:124px;top:446px" width="88" height="88"><path d="M29 0h30v25l4 4h25v29H63l-4 4v26H29V62l-4-4H0V29h25l4-4z" fill="#c6c6c6" stroke="#b0b0b0"/></svg>
<svg style="left:157px;top:450px" width="22" height="25"><rect x=".5" y=".500" width="21" height="23" fill="#e4ecf8" stroke="#4b3f9e"/><rect x="1" y="1" width="20" height="2" fill="#3a63c4"/><path d="M2 12h18" stroke="#333" stroke-dasharray="1 1"/><path d="M7 19l4-4 4 4z" fill="#3a4fb0"/><rect x="1" y="3" width="20" height="20" fill="#8ab" opacity=".2"/></svg>
<svg style="left:128px;top:479px" width="24" height="24"><rect x=".5" y=".500" width="23" height="23" fill="#e4ecf8" stroke="#4b3f9e"/><rect x="1" y="1" width="22" height="2" fill="#3a63c4"/><path d="M11 4v18" stroke="#333" stroke-dasharray="1 1"/><path d="M21 8v8l-5-4z" fill="#3a4fb0"/><rect x="1" y="3" width="22" height="20" fill="#8ab" opacity=".2"/></svg>
<svg style="left:156px;top:478px" width="23" height="24"><rect x=".5" y=".500" width="22" height="23" fill="#e4ecf8" stroke="#4b3f9e"/><rect x="1" y="1" width="21" height="2" fill="#3a63c4"/><path d="M2 6h19v12H2z" fill="none" stroke="#333" stroke-dasharray="1 1"/><path d="M10 18h5v3h-5zM16 18h5v3h-5z" fill="#eee" stroke="#333" stroke-width=".6"/></svg>
<svg style="left:184px;top:479px" width="24" height="24"><rect x=".5" y=".500" width="23" height="23" fill="#e4ecf8" stroke="#4b3f9e"/><rect x="1" y="1" width="22" height="2" fill="#3a63c4"/><path d="M13 4v18" stroke="#333" stroke-dasharray="1 1"/><path d="M3 8v8l5-4z" fill="#3a4fb0"/><rect x="1" y="3" width="22" height="20" fill="#8ab" opacity=".2"/></svg>
<svg style="left:157px;top:506px" width="22" height="25"><rect x=".5" y=".500" width="21" height="23" fill="#e4ecf8" stroke="#4b3f9e"/><rect x="1" y="1" width="20" height="2" fill="#3a63c4"/><path d="M2 13h18" stroke="#333" stroke-dasharray="1 1"/><path d="M7 7l4 4 4-4z" fill="#3a4fb0"/><rect x="1" y="13" width="20" height="10" fill="#8ab" opacity=".35"/></svg>

<!-- edge dock icons -->
<div class="a" style="left:628px;top:170px;width:29px;height:32px;background:#d2d2d2"></div>
<svg style="left:632px;top:174px" width="22" height="24"><rect x=".5" y=".500" width="21" height="23" fill="#e8eef8" stroke="#4b3f9e"/><rect x="1" y="1" width="20" height="2" fill="#3a63c4"/><path d="M2 13h18" stroke="#333" stroke-dasharray="1 1"/><path d="M7 7l4 4 4-4z" fill="#3a4fb0"/><rect x="1" y="14" width="20" height="9" fill="#8ab" opacity=".4"/></svg>
<div class="a" style="left:38px;top:541px;width:30px;height:29px;background:#d2d2d2"></div>
<svg style="left:42px;top:544px" width="23" height="23"><rect x=".5" y=".500" width="22" height="22" fill="#e8eef8" stroke="#4b3f9e"/><rect x="1" y="1" width="21" height="2" fill="#3a63c4"/><path d="M11 4v18" stroke="#333" stroke-dasharray="1 1"/><path d="M20 8v8l-5-4z" fill="#3a4fb0"/><rect x="1" y="3" width="10" height="19" fill="#8ab" opacity=".4"/></svg>
<div class="a" style="left:1211px;top:541px;width:30px;height:29px;background:#d2d2d2"></div>
<svg style="left:1214px;top:544px" width="23" height="23"><rect x=".5" y=".500" width="22" height="22" fill="#e8eef8" stroke="#4b3f9e"/><rect x="1" y="1" width="21" height="2" fill="#3a63c4"/><path d="M12 4v18" stroke="#333" stroke-dasharray="1 1"/><path d="M3 8v8l5-4z" fill="#3a4fb0"/><rect x="12" y="3" width="10" height="19" fill="#8ab" opacity=".4"/></svg>
<div class="a" style="left:625px;top:910px;width:29px;height:32px;background:#bfbfbf"></div>
<svg style="left:629px;top:914px" width="22" height="24"><rect x=".5" y=".500" width="21" height="23" fill="#e8eef8" stroke="#4b3f9e"/><rect x="1" y="1" width="20" height="2" fill="#3a63c4"/><path d="M2 12h18" stroke="#333" stroke-dasharray="1 1"/><path d="M7 6l4 4 4-4z" fill="#3a4fb0"/><rect x="1" y="13" width="20" height="10" fill="#8ab" opacity=".4"/></svg>

</body></html>
